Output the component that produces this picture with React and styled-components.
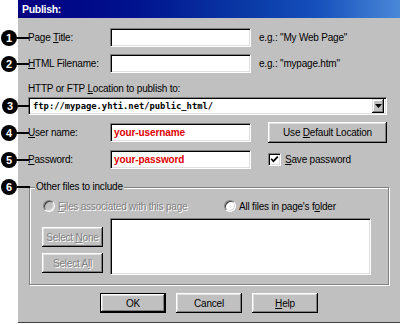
import React from 'react';
import styled, { createGlobalStyle } from 'styled-components';

const Global = createGlobalStyle`
  html, body { margin: 0; padding: 0; background: #fff; }
  body { font-family: "Liberation Sans", Arial, sans-serif; }
  #root { width: 400px; height: 324px; overflow: hidden; }
`;

const Page = styled.div`
  width: 400px;
  height: 324px;
  box-sizing: border-box;
  padding-left: 18px;
  background: #fff;
`;

const Dialog = styled.div`
  width: 382px;
  height: 323px;
  box-sizing: border-box;
  background: #c0c0c0;
  border-bottom: 1px solid #404040;
  display: flex;
  flex-direction: column;
  font-family: "Liberation Sans", Arial, sans-serif;
  font-size: 10px;
  letter-spacing: -0.2px;
  color: #000;
`;

const TitleBar = styled.div`
  height: 18px;
  flex: none;
  display: flex;
  align-items: center;
  padding-left: 4px;
  background: linear-gradient(90deg, #000080 0%, #00128e 30%, #0a3aa6 60%, #1550bc 78%, #4a88d8 100%);
  color: #fff;
  font-weight: bold;
  font-size: 10.5px;
  letter-spacing: -0.3px;
`;

const Body = styled.div`
  display: flex;
  flex-direction: column;
  padding: 10px 12px 0 10px;
`;

const Row = styled.div`
  position: relative;
  display: flex;
  align-items: center;
  height: ${p => p.$h || 19}px;
  margin-top: ${p => p.$mt || 0}px;
`;

const Label = styled.span`
  width: 82px;
  flex: none;
  white-space: nowrap;
`;

const Field = styled.div`
  box-sizing: border-box;
  width: ${p => p.$w}px;
  height: 19px;
  flex: none;
  display: flex;
  align-items: center;
  padding: 0 3px;
  background: #fff;
  border-top: 1px solid #808080;
  border-left: 1px solid #808080;
  border-bottom: 1px solid #fff;
  border-right: 1px solid #fff;
  box-shadow: inset 1px 1px #000, inset -1px -1px #dfdfdf;
  color: #e00000;
  font-weight: bold;
  letter-spacing: -0.1px;
`;

const Hint = styled.span`
  margin-left: 8px;
  white-space: nowrap;
`;

const CalloutWrap = styled.span`
  position: absolute;
  left: -27px;
  top: ${p => (p.$top != null ? `${p.$top}px` : '50%')};
  transform: translateY(-50%);
  display: flex;
  align-items: center;
`;

const CalloutDot = styled.span`
  width: 16px;
  height: 16px;
  border-radius: 50%;
  background: #000;
  color: #fff;
  font-weight: bold;
  font-size: 11px;
  letter-spacing: 0;
  line-height: 16px;
  text-align: center;
`;

const CalloutLine = styled.span`
  width: ${p => p.$len || 12}px;
  height: 2px;
  background: #000;
`;

const Callout = ({ n, top, len }) => (
  <CalloutWrap $top={top}>
    <CalloutDot>{n}</CalloutDot>
    <CalloutLine $len={len} />
  </CalloutWrap>
);

const LineLabel = styled.div`
  margin-top: 10px;
  height: 12px;
  line-height: 12px;
  white-space: nowrap;
`;

const Combo = styled.div`
  position: relative;
  box-sizing: border-box;
  width: 359px;
  height: 18px;
  margin-top: 2px;
  display: flex;
  align-items: center;
  padding: 0 2px 0 4px;
  background: #fff;
  border-top: 1px solid #808080;
  border-left: 1px solid #808080;
  border-bottom: 1px solid #fff;
  border-right: 1px solid #fff;
  box-shadow: inset 1px 1px #000, inset -1px -1px #dfdfdf;
`;

const ComboText = styled.span`
  flex: 1;
  font-family: "DejaVu Sans Mono", "Liberation Mono", monospace;
  font-weight: bold;
  font-size: 8.8px;
  letter-spacing: 0;
  white-space: nowrap;
`;

const DropBtn = styled.span`
  box-sizing: border-box;
  width: 12px;
  height: 14px;
  flex: none;
  display: flex;
  align-items: center;
  justify-content: center;
  background: #c0c0c0;
  box-shadow: inset -1px -1px #000, inset 1px 1px #dfdfdf, inset -2px -2px #808080, inset 2px 2px #fff;
`;

const Btn = styled.button`
  box-sizing: border-box;
  width: ${p => p.$w}px;
  height: ${p => p.$h || 20}px;
  flex: none;
  margin: 0;
  padding: 0;
  background: #c0c0c0;
  border: ${p => (p.$default ? '1px solid #000' : 'none')};
  box-shadow: inset -1px -1px #000, inset 1px 1px #fff, inset -2px -2px #808080, inset 2px 2px #dfdfdf;
  font-family: inherit;
  font-size: 10px;
  letter-spacing: -0.2px;
  color: ${p => (p.disabled ? '#808080' : '#000')};
  text-shadow: ${p => (p.disabled ? '1px 1px 0 #fff' : 'none')};
  text-align: center;
  white-space: nowrap;
`;

const Spacer = styled.span`
  width: ${p => p.$w}px;
  flex: none;
`;

const CheckBox = styled.span`
  box-sizing: border-box;
  width: 13px;
  height: 13px;
  flex: none;
  display: flex;
  align-items: center;
  justify-content: center;
  background: #fff;
  border-top: 1px solid #808080;
  border-left: 1px solid #808080;
  border-bottom: 1px solid #fff;
  border-right: 1px solid #fff;
  box-shadow: inset 1px 1px #000, inset -1px -1px #dfdfdf;
`;

const CheckText = styled.span`
  margin-left: 4px;
  white-space: nowrap;
`;

const GroupWrap = styled.div`
  position: relative;
  margin-top: 12px;
`;

const Group = styled.fieldset`
  box-sizing: border-box;
  width: 360px;
  margin: 0 0 0 1px;
  padding: 6px 0 9px 5px;
  border: 1px solid #808080;
  box-shadow: inset 1px 1px #fff, 1px 1px #fff;
  min-inline-size: 0;
`;

const Legend = styled.legend`
  padding: 0 1px;
  height: 12px;
  line-height: 12px;
  background: #c0c0c0;
  white-space: nowrap;
`;

const GroupInner = styled.div`
  padding-left: 7px;
  display: flex;
  flex-direction: column;
`;

const RadioRow = styled.div`
  display: grid;
  grid-template-columns: 181px auto;
  height: 14px;
  align-items: center;
`;

const RadioItem = styled.label`
  display: flex;
  align-items: center;
  white-space: nowrap;
  color: ${p => (p.$disabled ? '#808080' : '#000')};
  text-shadow: ${p => (p.$disabled ? '1px 1px 0 #fff' : 'none')};
`;

const RadioDot = styled.span`
  box-sizing: border-box;
  width: 12px;
  height: 12px;
  flex: none;
  margin: 0 3px 0 1px;
  border-radius: 50%;
  border: 1px solid;
  border-color: #808080 #fff #fff #808080;
  box-shadow: inset 1px 1px #404040, inset -1px -1px #dfdfdf;
  background: ${p => (p.$disabled ? '#c0c0c0' : '#fff')};
`;

const FilesArea = styled.div`
  display: flex;
  gap: 7px;
  margin-top: 5px;
`;

const SideButtons = styled.div`
  display: flex;
  flex-direction: column;
  gap: 6px;
  padding-top: 9px;
`;

const ListBox = styled.div`
  box-sizing: border-box;
  width: 261px;
  height: 57px;
  background: #fff;
  border-top: 1px solid #808080;
  border-left: 1px solid #808080;
  border-bottom: 1px solid #fff;
  border-right: 1px solid #fff;
  box-shadow: inset 1px 1px #000, inset -1px -1px #dfdfdf;
`;

const ButtonBar = styled.div`
  display: flex;
  justify-content: center;
  gap: 10px;
  margin-top: 8px;
  margin-left: -10px;
  margin-right: -12px;
`;

export default function App() {
  return (
    <>
      <Global />
      <Page>
        <Dialog>
          <TitleBar>Publish:</TitleBar>
          <Body>
            <Row>
              <Callout n="1" />
              <Label>Page <u>T</u>itle:</Label>
              <Field $w={141} />
              <Hint>e.g.: "My Web Page"</Hint>
            </Row>
            <Row $mt={7}>
              <Callout n="2" />
              <Label><u>H</u>TML Filename:</Label>
              <Field $w={141} />
              <Hint>e.g.: "mypage.htm"</Hint>
            </Row>
            <LineLabel>HTTP or FTP <u>L</u>ocation to publish to:</LineLabel>
            <Combo>
              <Callout n="3" len={11} />
              <ComboText>ftp://mypage.yhti.net/public_html/</ComboText>
              <DropBtn>
                <svg width="7" height="4" viewBox="0 0 7 4"><polygon points="0,0 7,0 3.5,4" fill="#000" /></svg>
              </DropBtn>
            </Combo>
            <Row $mt={7} $h={21}>
              <Callout n="4" />
              <Label><u>U</u>ser name:</Label>
              <Field $w={141}>your-username</Field>
              <Spacer $w={17} />
              <Btn $w={119} $h={21}>Use <u>D</u>efault Location</Btn>
            </Row>
            <Row $mt={7}>
              <Callout n="5" />
              <Label><u>P</u>assword:</Label>
              <Field $w={141}>your-password</Field>
              <Spacer $w={17} />
              <CheckBox>
                <svg width="9" height="9" viewBox="0 0 9 9"><path d="M1.2 3.8 L3.4 6.2 L7.8 1.6" stroke="#000" strokeWidth="1.7" fill="none" /></svg>
              </CheckBox>
              <CheckText><u>S</u>ave password</CheckText>
            </Row>
            <GroupWrap>
              <Callout n="6" top={6} len={13} />
              <Group>
                <Legend>Other files to include</Legend>
                <GroupInner>
                  <RadioRow>
                    <RadioItem $disabled>
                      <RadioDot $disabled />
                      <span><u>F</u>iles associated with this page</span>
                    </RadioItem>
                    <RadioItem>
                      <RadioDot />
                      <span>All files in page's f<u>o</u>lder</span>
                    </RadioItem>
                  </RadioRow>
                  <FilesArea>
                    <SideButtons>
                      <Btn $w={61} disabled>Select <u>N</u>one</Btn>
                      <Btn $w={61} disabled>Select A<u>l</u>l</Btn>
                    </SideButtons>
                    <ListBox />
                  </FilesArea>
                </GroupInner>
              </Group>
            </GroupWrap>
            <ButtonBar>
              <Btn $w={66} $default>OK</Btn>
              <Btn $w={66}>Cancel</Btn>
              <Btn $w={66}><u>H</u>elp</Btn>
            </ButtonBar>
          </Body>
        </Dialog>
      </Page>
    </>
  );
}
